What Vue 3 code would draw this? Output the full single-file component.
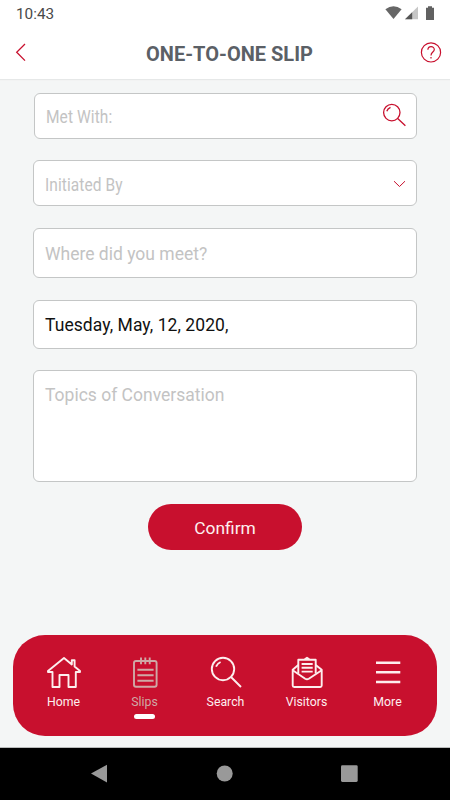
<script setup>
const tabs = [
  { id: 'home', label: 'Home' },
  { id: 'slips', label: 'Slips', active: true },
  { id: 'search', label: 'Search' },
  { id: 'visitors', label: 'Visitors' },
  { id: 'more', label: 'More' },
]
</script>

<template>
  <div class="screen">
    <div class="status">
      <span class="time">10:43</span>
      <svg class="status-icons" width="52" height="16" viewBox="0 0 52 16">
        <path d="M0.4 3.3Q8.5 -3 16.6 3.3L8.5 13z" fill="#666" />
        <path d="M33 0.5V13.3H20z" fill="#c6c6c6" />
        <path d="M27.2 6.3V13.3H20z" fill="#555" />
        <path d="M41 1.8H43V0.2H47V1.8H49V14H41z" fill="#616161" />
      </svg>
    </div>

    <header class="header">
      <svg class="back" width="12" height="20" viewBox="0 0 12 20">
        <path d="M10 2L1.7 10.3L10 18.6" />
      </svg>
      <h1 class="title">ONE-TO-ONE SLIP</h1>
      <svg class="help" width="22" height="22" viewBox="0 0 22 22">
        <circle cx="11" cy="11.4" r="9.6" />
        <path d="M7.9 8.8C7.9 4.6 14.3 4.6 14.3 8.6C14.3 11 11 11.2 11 14.4" />
        <path d="M11 16V17.4" />
      </svg>
    </header>

    <main class="form">
      <div class="field met">
        <span class="condensed">Met With:</span>
        <svg class="find" width="26" height="26" viewBox="0 0 26 26">
          <circle cx="10.8" cy="9.6" r="8.2" />
          <path d="M16.7 15.5L24.4 22.8M5.8 8.3C6.3 6.6 7.6 5.2 9.5 4.4" />
        </svg>
      </div>
      <div class="field initiated">
        <span class="condensed">Initiated By</span>
        <svg class="chevron" width="14" height="8" viewBox="0 0 14 8">
          <path d="M1 1.2L6.5 6.5L12 1.2" />
        </svg>
      </div>
      <div class="field tall where"><span class="place">Where did you meet?</span></div>
      <div class="field tall"><span class="date">Tuesday, May, 12, 2020,</span></div>
      <div class="field area"><span class="topics">Topics of Conversation</span></div>
      <button class="confirm">Confirm</button>
    </main>

    <nav class="tabs">
      <div v-for="tab in tabs" :key="tab.id" class="tab" :class="{ active: tab.active }">
        <svg class="icon" width="36" height="36" viewBox="0 0 36 36">
          <path
            v-if="tab.id === 'home'"
            d="M2 16L18 2.9L25.8 9.4V5.2H28.6V11.6L34 16V17H29.8V32H22.5V20H13.5V32H6.5V17H2z"
          />
          <g v-else-if="tab.id === 'slips'">
            <rect x="7" y="6" width="22.6" height="25.8" rx="2" />
            <path d="M14 2.4V9.2M18.3 2.4V9.2M22.7 2.4V9.2M10.4 14.7H26.6M10.4 20.3H26.6M10.4 25.7H26.6" />
          </g>
          <g v-else-if="tab.id === 'search'">
            <circle cx="15" cy="14" r="11.2" />
            <path d="M23 22L33 32M8 11.7C8.8 9.6 10.3 8 12.6 7" />
          </g>
          <g v-else-if="tab.id === 'visitors'">
            <path d="M9.3 10L3.7 14.8V30.5Q3.7 32 5.2 32H31.2Q32.7 32 32.7 30.5V14.8L26.7 10" />
            <path d="M3.7 15.2L16.2 23.7Q18 24.8 19.8 23.7L32.7 15.2" />
            <path d="M9.3 18.5V4.8H26.7V18.5M15.7 4.2L18 2.8L20.3 4.2" />
            <path d="M12.6 9H23.7M12.6 12.8H23.7M12.6 16.6H23.7" />
          </g>
          <path v-else class="bars" d="M6 7.7H30.3M6 17.3H30.3M6 27H30.3" />
        </svg>
        <span class="label">{{ tab.label }}</span>
        <span v-if="tab.active" class="indicator"></span>
      </div>
    </nav>

    <footer class="system">
      <svg width="450" height="52" viewBox="0 0 450 52" fill="#999">
        <path d="M91 25.5L107 16.8V34.4z" />
        <circle cx="224.7" cy="25.5" r="8" />
        <rect x="341" y="17.2" width="16.7" height="16.7" rx="1.3" />
      </svg>
    </footer>
  </div>
</template>

<style>
body {
  margin: 0;
}
</style>

<style scoped>
.screen {
  width: 450px;
  height: 800px;
  display: flex;
  flex-direction: column;
  background: #f4f6f6;
  font-family: Roboto, sans-serif;
  overflow: hidden;
}
.status {
  height: 28px;
  background: #fff;
  display: flex;
  justify-content: space-between;
  padding: 0 13px 0 16px;
}
.time {
  font-size: 15.3px;
  line-height: 28px;
  color: #4a4a4a;
}
.status-icons {
  margin-top: 6px;
}
.header {
  height: 51px;
  box-sizing: border-box;
  flex: none;
  background: #fff;
  box-shadow: 0 1px 1px #e6e8e8;
  display: flex;
  justify-content: space-between;
  padding: 0 8px 0 15px;
}
.back,
.help,
.find,
.chevron {
  fill: none;
  stroke: #c8102e;
  stroke-width: 1.3;
  flex: none;
}
.back {
  margin-top: 14px;
}
.help {
  margin-top: 13px;
  stroke-width: 1.2;
}
.title {
  margin: 0 0 0 12px;
  font-size: 20px;
  line-height: 52px;
  font-weight: 700;
  color: #5b6066;
}
.form {
  display: flex;
  flex-direction: column;
  padding: 14px 33px 0;
}
.field {
  box-sizing: border-box;
  height: 46px;
  border: 1px solid #c4c6c6;
  border-radius: 6px;
  background: #fff;
  display: flex;
  align-items: center;
  justify-content: space-between;
  padding: 0 11px;
  font-size: 17.5px;
  color: #c3c3c3;
  white-space: nowrap;
}
.met {
  margin-left: 1px;
  padding-right: 9px;
}
.initiated {
  margin-top: 21px;
  padding: 2px 9px 0 11px;
}
.chevron {
  stroke-width: 1;
}
.condensed {
  font-size: 18px;
  letter-spacing: 0.1px;
  transform: scaleX(0.86);
  transform-origin: left;
}
.tall {
  height: 50px;
  margin-top: 22px;
}
.where {
  padding-top: 1px;
}
.tall + .tall {
  height: 49px;
}
.date {
  color: #111;
  letter-spacing: 0.06px;
}
.area {
  height: 112px;
  margin-top: 21px;
  align-items: flex-start;
  padding-top: 14px;
}
.confirm {
  width: 154px;
  height: 46px;
  margin: 22px 0 0 115px;
  padding: 1px 0 0;
  border: 0;
  border-radius: 23px;
  background: #c8102e;
  color: #fdf0f0;
  font: 17.4px Roboto, sans-serif;
}
.tabs {
  box-sizing: border-box;
  width: 424px;
  height: 101px;
  flex: none;
  margin: auto 13px 11px;
  padding: 20px 9px 0 10px;
  border-radius: 32px;
  background: #c8102e;
  display: flex;
}
.tab {
  flex: 1;
  display: flex;
  flex-direction: column;
  align-items: center;
  color: #fdeeee;
}
.icon {
  fill: none;
  stroke: currentColor;
  stroke-width: 1.9;
  stroke-linejoin: round;
}
.bars {
  stroke-width: 2.4;
}
.label {
  font-size: 12.3px;
  line-height: 16px;
  margin-top: 3px;
}
.active {
  color: #cfa9a6;
}
.indicator {
  width: 21px;
  height: 5px;
  margin-top: 4px;
  border-radius: 3px;
  background: #fff;
}
.system {
  height: 52px;
  flex: none;
  background: #000;
  border-top: 1px solid #b9bbbb;
}
.system svg {
  display: block;
}
</style>
